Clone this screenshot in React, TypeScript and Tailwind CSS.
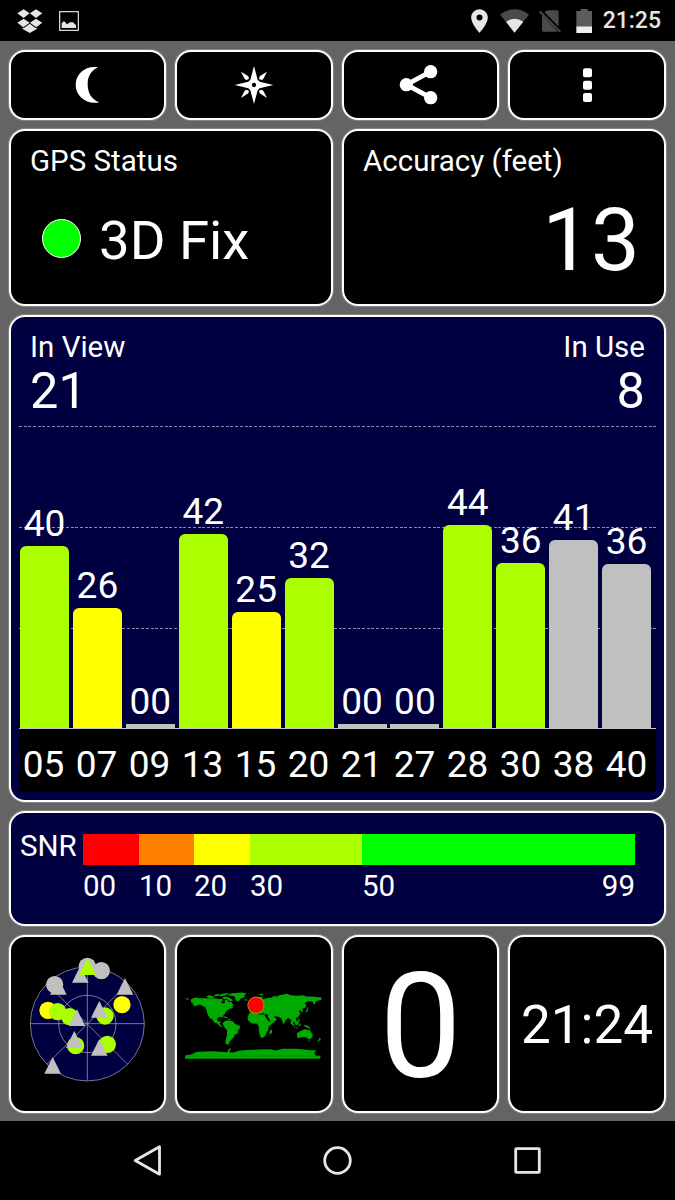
import React from 'react';

interface Satellite {
    id: string;
    snr: string;
    height: number;
    color: string;
}

const LIME = 'bg-[#aaff00]';
const YELLOW = 'bg-[#ffff00]';
const GRAY = 'bg-[#c0c0c0]';

const satellites: Satellite[] = [
    { id: '05', snr: '40', height: 183, color: LIME },
    { id: '07', snr: '26', height: 121, color: YELLOW },
    { id: '09', snr: '00', height: 5, color: GRAY },
    { id: '13', snr: '42', height: 195, color: LIME },
    { id: '15', snr: '25', height: 117, color: YELLOW },
    { id: '20', snr: '32', height: 151, color: LIME },
    { id: '21', snr: '00', height: 5, color: GRAY },
    { id: '27', snr: '00', height: 5, color: GRAY },
    { id: '28', snr: '44', height: 204, color: LIME },
    { id: '30', snr: '36', height: 166, color: LIME },
    { id: '38', snr: '41', height: 189, color: GRAY },
    { id: '40', snr: '36', height: 165, color: GRAY },
];

const snrScale = [
    { label: '00', width: 'w-[56px]', color: 'bg-[#ff0000]' },
    { label: '10', width: 'w-[55px]', color: 'bg-[#ff8000]' },
    { label: '20', width: 'w-[56px]', color: 'bg-[#ffff00]' },
    { label: '30', width: 'w-[112px]', color: 'bg-[#aaff00]' },
    { label: '50', width: 'w-[273px]', color: 'bg-[#00ff00]' },
];

const panel = 'rounded-[16px] border-2 border-white shadow-[0_0_0_1px_rgba(255,255,255,0.2)]';

const StatusBar: React.FC = () => (
    <header className="flex h-[41px] items-center justify-between bg-black pl-[17px] pr-[14px]">
        <div className="flex items-center gap-[16px]">
            <svg viewBox="50 26 77 72" className="h-[24px] w-[25.6px]" fill="#e6e6e6">
                <path d="M70 27l18 12-18 14-19-14zM107 27l19 12-19 14-18-14zM51 67l19-12 18 12-19 14zM126 67l-19-12-18 12 19 14z" />
                <path d="M88.500 70l17 13 4-1v4L88.500 98 67 86v-4l4 1z" />
            </svg>
            <svg viewBox="177 32 60 60" className="h-[20px] w-[20px]">
                <rect x="179" y="34" width="56" height="56" fill="none" stroke="#e6e6e6" strokeWidth="3.5" />
                <path d="M185 83v-14l7-7 9 10 9-6h9l9 9v8z" fill="#e6e6e6" />
            </svg>
        </div>
        <div className="flex items-center">
            <svg viewBox="409 27 51 71" className="h-[24px] w-[17px]" fill="#e6e6e6">
                <path fillRule="evenodd" d="M434.500 27c-14 0-25 11-25 25 0 19 25 46 25 46s25-27 25-46c0-14-11-25-25-25zm0 34a9 9 0 1 1 0-18 9 9 0 0 1 0 18z" />
            </svg>
            <svg viewBox="497 26 86 71" className="ml-[12px] h-[24px] w-[29px]">
                <path d="M497 42Q540 11 583 42L540 96z" fill="#4a4a4a" />
                <path d="M515 64Q540 46 566 64L540 96z" fill="#e6e6e6" />
            </svg>
            <svg viewBox="613 28 65 70" className="ml-[10px] h-[24px] w-[22px]" fill="#4a4a4a">
                <path d="M638 31h28q5 0 5 5v43l-42-42zM622 46l46 47q-1 2-4 2h-38q-4 0-4-5z" />
                <path d="M617 33l61 60-4 4-61-60z" />
            </svg>
            <svg viewBox="722 25 48 72" className="ml-[15px] h-[24px] w-[16px]">
                <path d="M736 25h21v6h13v46h-47V31h13z" fill="#5c5c5c" />
                <path d="M723 77h47v20h-47z" fill="#eeeeee" />
            </svg>
            <span className="ml-[11px] text-[23px] font-medium leading-[24px] text-[#e6e6e6]">21:25</span>
        </div>
    </header>
);

const ActionButton: React.FC<{ label: string; children: React.ReactNode }> = ({ label, children }) => (
    <button aria-label={label} className={`flex items-center justify-center bg-black ${panel}`}>
        {children}
    </button>
);

const Actions: React.FC = () => (
    <div className="grid h-[70px] grid-cols-[157px_158px_157px_158px] gap-[9px]">
        <ActionButton label="Night mode">
            <svg viewBox="203 195 120 120" className="h-10 w-10" fill="#fff">
                <path d="M293 202C257 196 226 220 226 255s34 60 71 52C270 296 262 275 262 251c0-22 12-41 31-49z" />
            </svg>
        </ActionButton>
        <ActionButton label="Compass">
            <svg viewBox="702 195 120 120" className="h-10 w-10" fill="#fff">
                <path fillRule="evenodd" d="M762 198l11 41 6 6 41 10-41 10-6 6-11 41-11-41-6-6-41-10 41-10 6-6zM762 248.500a6.500 6.500 0 1 0 0 13 6.500 6.500 0 0 0 0-13z" />
                <path d="M723 215l22 14 2 8-8 3-5-3zM801 215l-22 14-2 8 8 3 5-3zM723 294l22-14 2-8-8-3-5 3zM801 294l-22-14-2-8 8-3 5 3z" />
            </svg>
        </ActionButton>
        <ActionButton label="Share">
            <svg viewBox="191 189 132 132" className="h-11 w-11" fill="#fff">
                <path d="M286 215l-73 39 73 39" fill="none" stroke="#fff" strokeWidth="14" />
                <circle cx="286" cy="215" r="20" />
                <circle cx="213" cy="254" r="20" />
                <circle cx="286" cy="293" r="20" />
            </svg>
        </ActionButton>
        <ActionButton label="Menu">
            <svg viewBox="696 195 120 120" className="h-10 w-10" fill="#fff">
                <rect x="744" y="205" width="27" height="27" rx="6" />
                <rect x="744" y="242" width="27" height="27" rx="6" />
                <rect x="744" y="279" width="27" height="27" rx="6" />
            </svg>
        </ActionButton>
    </div>
);

const Summary: React.FC = () => (
    <div className="mt-[9px] grid h-[177px] grid-cols-2 gap-[9px]">
        <section className={`bg-black pl-[19px] pt-[12px] ${panel}`}>
            <h2 className="text-[29.5px] leading-[36px]">GPS Status</h2>
            <div className="mt-[29px] flex items-center gap-[18px] pl-[12px]">
                <span className="mb-[3px] h-[39px] w-[39px] rounded-full border border-white bg-[#00ff00]" />
                <span className="text-[54.5px] leading-[64px]">3D Fix</span>
            </div>
        </section>
        <section className={`bg-black pl-[19px] pr-[24px] pt-[12px] ${panel}`}>
            <h2 className="text-[29.5px] leading-[36px]">Accuracy (feet)</h2>
            <p className="mt-[16px] text-right text-[87px] leading-[90px]">13</p>
        </section>
    </div>
);

const GridLine: React.FC = () => (
    <div className="h-px bg-[repeating-linear-gradient(90deg,#8c8ca8_0_3px,transparent_3px_4.7px)]" />
);

const SignalChart: React.FC = () => (
    <section className={`mt-[9px] h-[487px] bg-[#000040] ${panel}`}>
        <div className="flex h-[109px] justify-between pl-[19px] pr-[19px] pt-[13px]">
            <div>
                <p className="text-[29.5px] leading-[34px]">In View</p>
                <p className="text-[50.5px] leading-[54px]">21</p>
            </div>
            <div className="text-right">
                <p className="text-[29.5px] leading-[34px]">In Use</p>
                <p className="text-[50.5px] leading-[54px]">8</p>
            </div>
        </div>
        <div className="relative mx-2 h-[303px] border-b border-[#c0c0c0]">
            <div className="absolute inset-0 flex flex-col gap-[100px]">
                <GridLine />
                <GridLine />
                <GridLine />
            </div>
            <div className="relative grid h-full w-[636px] grid-cols-12 items-end pl-[1px]">
                {satellites.map((sat) => (
                    <div key={sat.id} className="flex w-[49px] flex-col items-center">
                        <span className="mb-[3px] text-[37px] leading-[39px]">{sat.snr}</span>
                        <span
                            className={`w-[49px] ${sat.height > 10 ? 'rounded-t-[6px]' : ''} ${sat.color}`}
                            style={{ height: sat.height - 1 }}
                        />
                    </div>
                ))}
            </div>
        </div>
        <div className="mx-2 h-[63px] bg-black pt-[9px]">
            <div className="grid w-[636px] grid-cols-12">
                {satellites.map((sat) => (
                    <span key={sat.id} className="w-[49px] text-center text-[37px] leading-[53px]">{sat.id}</span>
                ))}
            </div>
        </div>
    </section>
);

const SnrLegend: React.FC = () => (
    <section className={`mt-[9px] flex h-[115px] bg-[#000040] pl-[9px] pt-[21px] ${panel}`}>
        <span className="w-[63px] text-[29.5px] leading-[25px]">SNR</span>
        <div>
            <div className="flex h-[31px]">
                {snrScale.map((step) => (
                    <span key={step.label} className={`${step.width} ${step.color}`} />
                ))}
            </div>
            <div className="mt-[3px] flex text-[29.5px] leading-[36px]">
                {snrScale.map((step) => (
                    <span key={step.label} className={`flex justify-between ${step.width}`}>
                        {step.label}
                        {step.label === '50' && <span>99</span>}
                    </span>
                ))}
            </div>
        </div>
    </section>
);

const Triangle: React.FC<{ x: number; y: number; fill?: string }> = ({ x, y, fill = '#c0c0c0' }) => (
    <path d={`M${x} ${y - 26}l25 50h-50z`} fill={fill} />
);

const SkyView: React.FC = () => (
    <svg viewBox="63 111 400 400" className="h-[133.3px] w-[133.3px]">
        <g fill="none" stroke="#a0a0b4" strokeWidth="2.2">
            <circle cx="262" cy="312" r="171" fill="#000040" />
            <circle cx="262" cy="312" r="86" />
            <path d="M91 311h342M262 140v342M141 191l242 242M383 191L141 433" />
        </g>
        <circle cx="262" cy="139" r="26" fill="#c0c0c0" />
        <circle cx="304" cy="152" r="26" fill="#c0c0c0" />
        <circle cx="164" cy="194" r="26" fill="#c0c0c0" />
        <Triangle x={241} y={164} />
        <Triangle x={263} y={141} fill="#aaff00" />
        <Triangle x={175} y={200} />
        <Triangle x={375} y={200} />
        <circle cx="366" cy="254" r="26" fill="#ffff00" />
        <circle cx="144" cy="271" r="26" fill="#ffff00" />
        <circle cx="173" cy="275" r="26" fill="#aaff00" />
        <circle cx="209" cy="290" r="26" fill="#aaff00" />
        <Triangle x={231} y={294} />
        <circle cx="315" cy="288" r="26" fill="#aaff00" />
        <Triangle x={298} y={269} />
        <circle cx="227" cy="377" r="26" fill="#aaff00" />
        <Triangle x={223} y={359} />
        <circle cx="322" cy="373" r="26" fill="#aaff00" />
        <Triangle x={298} y={383} />
        <Triangle x={158} y={437} />
    </svg>
);

const WorldMap: React.FC = () => (
    <svg viewBox="46 55.500 412 210" className="h-[70px] w-[137.3px]" fill="#00aa00">
        {/* North America */}
        <path d="M64 86l12-5 16 2 14 0 12 1 18-1 14 3 6-3 4 6-6 7 6 3 6-4 0-7 8 1 4 6 6-2 8 12-8 4 6 3-11 4-6 3-6 6-2 6-6 6 0 8-4-6-10 1-3 7 4 7 7-2 1 4-4 2 4 8 6 2-2 2-8-3-6-7-10-4-6-9-4-5 1 6-6-8-5-7-2-9-4-12-10-6-8-4-10 4-8 4 4-5-8-3 2-5-6-2z" />
        <path d="M110 79l8-5 10 2 6 6-16 2zM132 75l8-4 10-2-6 7-8 2zM146 74l12-4 20-3-10 7-12 3-8 0zM158 80l8-2 14 4 10 7-8 4-9-7-12-1zM47 83l9 1 4 3-10 0zM184 108l6 0 1 4-7-1z" />
        <path d="M172 73l16-5 28-2 15 2-6 6-1 6-10 4-6 7-5 2-6-6-2-9-10-2z" />
        {/* Caribbean */}
        <path d="M158 137l10 1 8 4-6 1-10-4zM174 145l10 0-2 3-7-1z" />
        {/* South America */}
        <path d="M166 152l8-3 9 2 9 3 4 6 16 7-3 9-4 5-1 8-9 4-3 8-6 5-3 4-4 5-2 7-4 0-6-3 2-13 3-13 0-14-7-8-6-11 3-6z" />
        {/* Europe and Asia */}
        <path d="M238 120l0-9 8-3 2-7 8-5-4-5 8-9 12-3 9 3-3 4 8-1 10-3 8 0 8-3 10 0 4-4 12-2 14-3 12 4 16 2 16-1 12 3 20 0 18 2 10 1 0 6-7 2-10 3-3 8-5 3 0-8-8-3-12 1-6 6 5 4-3 9-9 3 2 8-4 2-3-6-5 2 4 9-5 8-9 5 3 9-3 6-7-5 0 7 5 8-3 1-7-9-1-9-6-8-6 1-7 8-1 7-4 1-6-16-8-5-9-1-5-3 3 7 6 4-6 7-8 5-4-3-6-11-4-6 1-6-12-1-3-4-4 2 0 4-5-4-6-4 5 8-3 2-7-9-7 2-6 6z" />
        <path d="M236 105l3-9 4 8 2 4-7 2zM225 87l7-1 3 3-7 2zM265 72l10-2 8 2-7 3zM307 82l4-5 12-3-9 6-2 3zM340 72l10-1 4 3zM392 75l12 0 8 2-15 2zM408 122l4-5 2-10 2 8-3 8-8 3z" />
        {/* Africa */}
        <path d="M234 141l4-12 14-4 8 0 3 6 9 1 12 0 8 14 6 7 11-1-2 7-10 10-1 10-5 6-4 10-5 6-8 1-4-9-2-12-1-14-5-8-13 1-10-6-5-8z" />
        <path d="M307 177l0 8-5 7-3-3 1-8z" />
        {/* Oceania */}
        <path d="M382 188l8-5 8-4 6-3 8 1 4 4 3-7 4 9 6 8 0 7-6 7-6 1-6-5-7-1-8 0-9 3-3-1-2-8zM416 208l5 0-2 4zM450 201l4 5-5 5-8 4 6-8z" />
        <path d="M361 152l6 3 7 9-3 2-7-7zM376 157l6-5 5-3 1 7-5 8-6-1zM388 159l6 1-3 7-4 0zM386 142l4 6 0 5-4-3zM402 163l8 1 8 4 5 5-7 0-9-4zM373 170l13 2-1 2-11-2zM350 150l2 4-3 0z" />
        {/* Antarctica */}
        <path d="M47 255l20-4 10-6 13-1 20-1 14-1 28 2 20 1 4-4-2-3 9-5 1 3-5 5 3 5 10 0 8-3 10-2 12-2 26-1 16-1 22-1 16 0 16 4 8-2 14-3 20 0 20 0 18 1 24 3 17 0-5 10 4 6 14 2 0 8-409 0z" />
        <path d="M47 256.500h409" stroke="#008000" strokeWidth="1.5" fill="none" />
        <circle cx="259" cy="104" r="24.500" fill="#ff0000" stroke="#b89018" strokeWidth="3" />
    </svg>
);

const Widgets: React.FC = () => (
    <div className="mt-[9px] grid h-[178px] grid-cols-[157px_158px_157px_158px] gap-[9px]">
        <section className={`flex items-center justify-center overflow-hidden bg-black ${panel}`}>
            <SkyView />
        </section>
        <section className={`flex items-center justify-center bg-black ${panel}`}>
            <WorldMap />
        </section>
        <section className={`flex items-center justify-center bg-black pt-[6px] text-[147px] leading-[150px] ${panel}`}>
            0
        </section>
        <section className={`flex items-center justify-center bg-black pt-[2px] text-[53px] leading-[60px] ${panel}`}>
            21:24
        </section>
    </div>
);

const NavBar: React.FC = () => (
    <nav className="flex h-[79px] items-center justify-center gap-[160px] bg-black pb-[1px] pr-[1px]">
        <svg viewBox="0 0 30 32" className="h-[32px] w-[30px]" fill="none" stroke="#e6e6e6" strokeWidth="2.8" strokeLinejoin="round">
            <path d="M3.200 16.500L27.500 2.800v27.400z" />
        </svg>
        <svg viewBox="0 0 30 30" className="h-[30px] w-[30px]" fill="none" stroke="#e6e6e6" strokeWidth="2.8">
            <circle cx="15.500" cy="15.500" r="12.800" />
        </svg>
        <svg viewBox="0 0 30 30" className="h-[30px] w-[30px]" fill="none" stroke="#e6e6e6" strokeWidth="2.8" strokeLinejoin="round">
            <rect x="3.700" y="3.700" width="23.600" height="23.600" rx="0.500" />
        </svg>
    </nav>
);

const App: React.FC = () => (
    <div className="h-[1200px] w-[675px] overflow-hidden bg-[#646464] font-['Roboto',sans-serif] text-white">
        <StatusBar />
        <main className="h-[1080px] px-[9px] pt-[9px]">
            <Actions />
            <Summary />
            <SignalChart />
            <SnrLegend />
            <Widgets />
        </main>
        <NavBar />
    </div>
);

export default App;
